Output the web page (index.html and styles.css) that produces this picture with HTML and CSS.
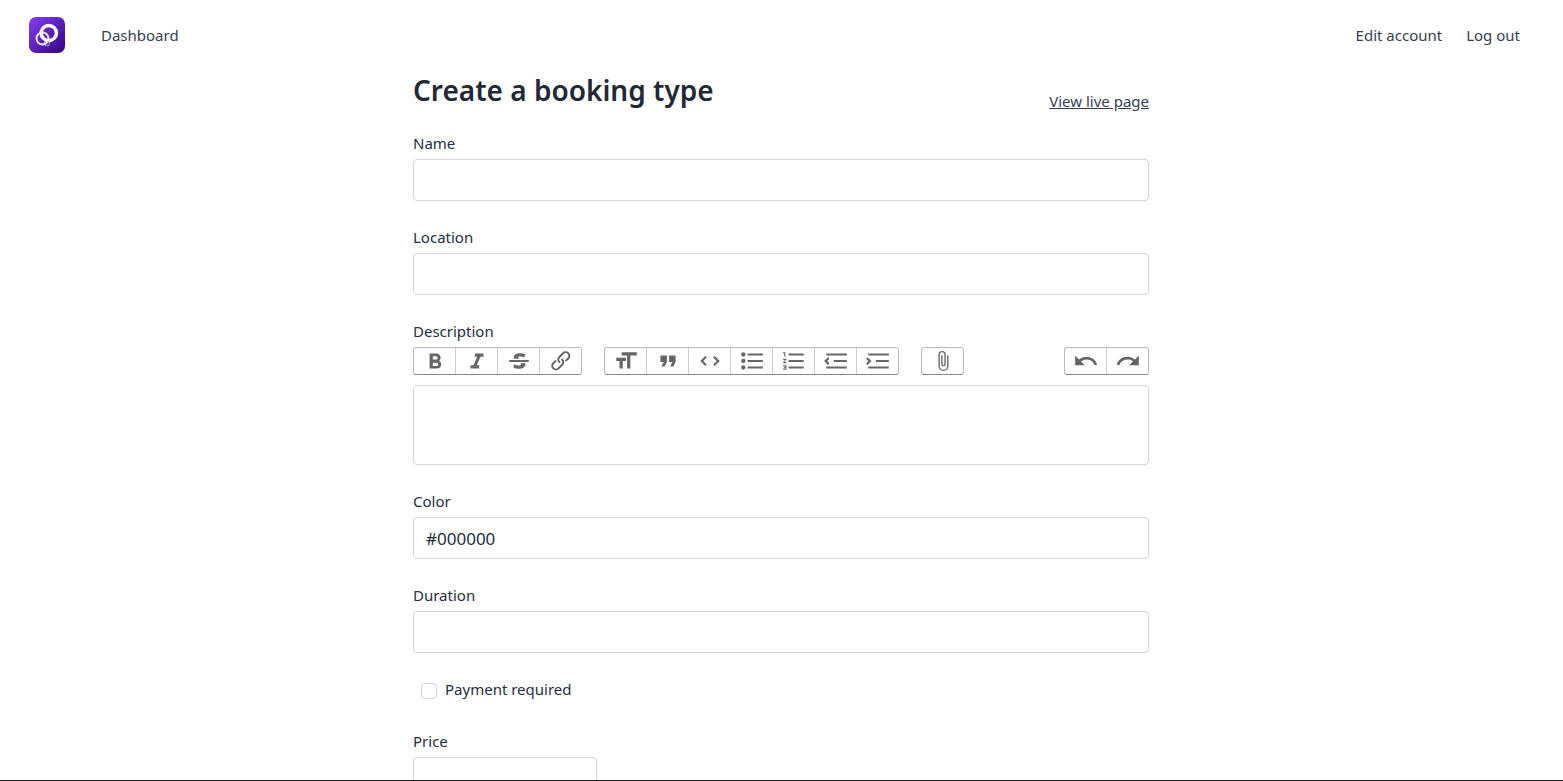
FILE: index.html
```
<!DOCTYPE html>
<html lang="en">
<head>
<meta charset="utf-8">
<title>Create a booking type</title>
<link rel="stylesheet" href="styles.css">
</head>
<body>
<header class="topbar">
  <a class="logo" href="#" aria-label="Home">
    <svg viewBox="0 0 36 36" width="36" height="36" aria-hidden="true">
      <defs><linearGradient id="g" x1="0" y1="0" x2="1" y2="1"><stop offset="0" stop-color="#8640f5"/><stop offset="1" stop-color="#33007f"/></linearGradient></defs>
      <rect width="36" height="36" rx="7" fill="url(#g)"/>
      <g fill="none" stroke="#fff">
        <circle cx="17.8" cy="26.2" r="2.7" stroke-width=".8" opacity=".75"/>
        <circle cx="13.5" cy="21.5" r="6" stroke-width="1.9" opacity=".9"/>
        <circle cx="19.8" cy="16" r="7.6" stroke-width="3.5"/>
      </g>
    </svg>
  </a>
  <nav class="nav">
    <a href="#">Dashboard</a>
    <div class="account"><a href="#">Edit account</a><a href="#">Log out</a></div>
  </nav>
</header>
<main class="page">
  <div class="heading">
    <h1>Create a booking type</h1>
    <a href="#">View live page</a>
  </div>
  <form class="form">
    <div class="field"><label for="name">Name</label><input class="control" id="name" type="text"></div>
    <div class="field"><label for="location">Location</label><input class="control" id="location" type="text"></div>
    <div class="field">
      <label for="description">Description</label>
      <div class="toolbar">
        <div class="group">
          <button type="button" aria-label="Bold"><svg viewBox="0 0 24 24"><path d="M15.6 11.8c1-.7 1.6-1.8 1.6-2.8a4 4 0 0 0-4-4H7v14h7c2.1 0 3.7-1.7 3.7-3.8 0-1.5-.8-2.8-2.1-3.4zM10 7.5h3a1.5 1.5 0 1 1 0 3h-3v-3zm3.5 9H10v-3h3.5a1.5 1.5 0 1 1 0 3z"/></svg></button>
          <button type="button" aria-label="Italic"><svg viewBox="0 0 24 24"><path d="M10 5v3h2.2l-3.4 8H6v3h8v-3h-2.2l3.4-8H18V5h-8z"/></svg></button>
          <button type="button" aria-label="Strikethrough"><svg viewBox="0 0 24 24"><path d="M12.73 14l.28.14c.26.15.45.3.57.44.12.14.18.3.18.5 0 .3-.15.56-.44.75-.3.2-.76.3-1.39.3A13.52 13.52 0 0 1 7 14.95v3.37a10.64 10.64 0 0 0 4.84.88c1.26 0 2.35-.19 3.28-.56.93-.37 1.64-.9 2.14-1.57s.74-1.45.74-2.32c0-.26-.02-.51-.06-.75h-5.21zm-5.5-4c-.08-.34-.12-.7-.12-1.1 0-1.29.52-2.3 1.58-3.02 1.05-.72 2.5-1.08 4.34-1.08 1.62 0 3.28.34 4.97 1l-1.3 2.93c-1.47-.6-2.73-.9-3.8-.9-.55 0-.96.08-1.2.26-.26.17-.38.38-.38.64 0 .27.16.52.48.74.17.12.53.3 1.05.53H7.23zM3 13h18v-2H3v2z"/></svg></button>
          <button type="button" aria-label="Link"><svg viewBox="0 0 24 24"><path d="M9.88 13.7a4.3 4.3 0 0 1 0-6.07l3.37-3.37a4.26 4.26 0 0 1 6.07 0 4.3 4.3 0 0 1 0 6.06l-1.96 1.72a.91.91 0 1 1-1.3-1.3l1.97-1.71a2.46 2.46 0 0 0-3.48-3.48l-3.38 3.37a2.46 2.46 0 0 0 0 3.48.91.91 0 1 1-1.3 1.3z"/><path d="M4.25 19.46a4.3 4.3 0 0 1 0-6.07l1.93-1.9a.91.91 0 1 1 1.3 1.3l-1.93 1.9a2.46 2.46 0 0 0 3.48 3.48l3.37-3.38c.96-.96.96-2.52 0-3.48a.91.91 0 1 1 1.3-1.3 4.3 4.3 0 0 1 0 6.07l-3.38 3.38a4.26 4.26 0 0 1-6.07 0z"/></svg></button>
        </div>
        <div class="group">
          <button type="button" aria-label="Heading"><svg viewBox="0 0 24 24"><path d="M12 9v3H9v7H6v-7H3V9h9zM8 4h14v3h-6v12h-3V7H8V4z"/></svg></button>
          <button type="button" aria-label="Quote"><svg viewBox="0 0 24 24"><path d="M6 17h3l2-4V7H5v6h3zm8 0h3l2-4V7h-6v6h3z"/></svg></button>
          <button type="button" aria-label="Code"><svg viewBox="0 0 24 24"><path d="M18.2 12L15 15.2l1.4 1.4L21 12l-4.6-4.6L15 8.8l3.2 3.2zM5.8 12L9 8.8 7.6 7.4 3 12l4.6 4.6L9 15.2 5.8 12z"/></svg></button>
          <button type="button" aria-label="Bullets"><svg viewBox="0 0 24 24"><path d="M4 4a2 2 0 1 0 0 4 2 2 0 0 0 0-4zm0 6a2 2 0 1 0 0 4 2 2 0 0 0 0-4zm0 6a2 2 0 1 0 0 4 2 2 0 0 0 0-4zm4 3h14v-2H8v2zm0-6h14v-2H8v2zm0-8v2h14V5H8z"/></svg></button>
          <button type="button" aria-label="Numbers"><svg viewBox="0 0 24 24"><path d="M2 17h2v.5H3v1h1v.5H2v1h3v-4H2v1zm1-9h1V4H2v1h1v3zm-1 3h1.8L2 13.1v.9h3v-1H3.2L5 10.9V10H2v1zm5-6v2h14V5H7zm0 14h14v-2H7v2zm0-6h14v-2H7v2z"/></svg></button>
          <button type="button" aria-label="Decrease level"><svg viewBox="0 0 24 24"><path d="M3 19h19v-2H3v2zm7-6h12v-2H10v2zm-8.3-.3l2.8 2.9L6 14.2 4 12l2-2-1.4-1.5L1 12l.7.7zM3 5v2h19V5H3z"/></svg></button>
          <button type="button" aria-label="Increase level"><svg viewBox="0 0 24 24"><path d="M3 19h19v-2H3v2zm7-6h12v-2H10v2zm-6.9-1L1 14.2l1.4 1.4L6 12l-.7-.7-2.8-2.8L1 9.9 3.1 12zM3 5v2h19V5H3z"/></svg></button>
        </div>
        <div class="group">
          <button type="button" aria-label="Attach files"><svg class="clip" viewBox="0 0 24 24"><path d="M16.5 6v11.5a4 4 0 1 1-8 0V5a2.5 2.5 0 0 1 5 0v10.5a1 1 0 1 1-2 0V6H10v9.5a2.5 2.5 0 0 0 5 0V5a4 4 0 1 0-8 0v12.5a5.5 5.5 0 0 0 11 0V6h-1.5z"/></svg></button>
        </div>
        <div class="group history">
          <button type="button" aria-label="Undo"><svg viewBox="0 0 24 24"><path d="M12.5 8c-2.6 0-5 1-6.9 2.6L2 7v9h9l-3.6-3.6A8 8 0 0 1 20 16l2.4-.8a10.5 10.5 0 0 0-10-7.2z"/></svg></button>
          <button type="button" aria-label="Redo"><svg viewBox="0 0 24 24"><path d="M18.4 10.6a10.5 10.5 0 0 0-16.9 4.6L4 16a8 8 0 0 1 12.7-3.6L13 16h9V7l-3.6 3.6z"/></svg></button>
        </div>
      </div>
      <textarea class="control editor" id="description"></textarea>
    </div>
    <div class="field"><label for="color">Color</label><input class="control" id="color" type="text" value="#000000"></div>
    <div class="field"><label for="duration">Duration</label><input class="control" id="duration" type="text"></div>
    <div class="check"><input id="payment" type="checkbox"><label for="payment">Payment required</label></div>
    <div class="field price"><label for="price">Price</label><input class="control" id="price" type="text"></div>
  </form>
</main>
</body>
</html>
```
FILE: styles.css
```
*, *::before, *::after { box-sizing: border-box; }

body {
  margin: 0;
  height: 100vh;
  overflow: hidden;
  padding-right: 1px;
  border-bottom: 1px solid #1a1a1e;
  background: #fff;
  color: #252f3f;
  font: 15px/24px "Noto Sans", sans-serif;
}

a { color: #374151; text-decoration: none; }

.topbar {
  display: flex;
  align-items: center;
  gap: 36px;
  height: 70px;
  padding: 0 42px 0 29px;
}
.logo, .logo svg { display: block; }
.nav { display: flex; flex: 1; justify-content: space-between; }
.account { display: flex; gap: 24px; }

.page { max-width: 768px; margin: 0 auto; padding: 2px 16px; }
.heading {
  display: flex;
  justify-content: space-between;
  height: 41px;
  margin-bottom: 18px;
}
.heading h1 { margin: 0; font-size: 28px; line-height: 36px; font-weight: 600; color: #1f2937; }
.heading a { align-self: flex-end; text-decoration: underline; }

.form, .field { display: flex; flex-direction: column; }
.form { gap: 24px; }
.field { gap: 4px; }

.control {
  width: 100%;
  height: 42px;
  padding: 8px 12px;
  border: 1px solid #d2d3dc;
  border-radius: 4px;
  background: #fff;
  color: inherit;
  font: inherit;
  font-size: 17px;
}
.editor { display: block; height: 80px; margin-top: 6px; resize: none; }

.toolbar { display: flex; gap: 22px; }
.group {
  display: flex;
  height: 28px;
  border: 1px solid #bbb;
  border-right: 0;
  border-bottom-color: #888;
  border-radius: 3px;
}
.group button {
  display: flex;
  align-items: center;
  justify-content: center;
  width: 42px;
  padding: 0;
  border: 0;
  border-right: 1px solid #ccc;
  background: none;
}
.group button:last-child { border-right-color: #bbb; border-radius: 0 3px 3px 0; }
.group svg { width: 26px; height: 26px; flex: none; fill: #666; }
.group .clip { width: 22px; height: 22px; }
.history { margin-left: auto; }

.check { display: flex; align-items: center; gap: 8px; padding-left: 8px; margin-bottom: 4px; }
.check input {
  appearance: none;
  width: 16px;
  height: 16px;
  margin: 4px 0 0;
  border: 1px solid #d2d3dc;
  border-radius: 4px;
}
.price { width: 25%; }
```
